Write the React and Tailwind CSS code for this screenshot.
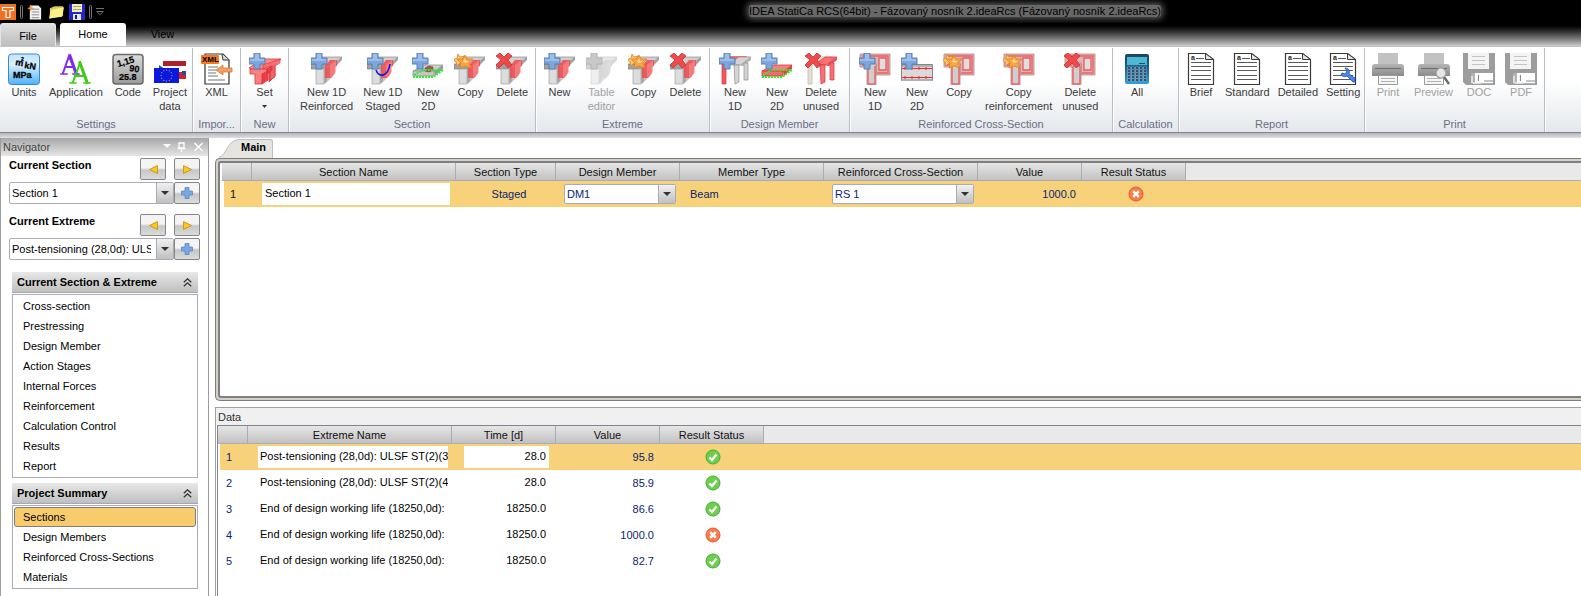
import React from "react";

/* ---------- ribbon icons ---------- */

function Plus() {
  return (
    <g>
      <path d="M5 0h6v5h5v6h-5v5H5v-5H0V5h5z" fill="#7da7dc" stroke="#5b7fb4" strokeWidth="1" />
      <path d="M6 1h4v5h5v2H1V6h5z" fill="#a9c9ee" opacity=".7" />
    </g>
  );
}

function Star() {
  return (
    <g stroke="#d9822b" strokeWidth=".8" fill="#fba63c">
      <path d="M4 1l2 3 4-1-2 4 2 3-4 0-3 3-1-4-3-2 4-2z" fill="#ffc36e" />
      <path d="M11 2l2 4 6 0-4 4 2 5-6-2-5 2 1-5-4-4 6 0z" />
      <path d="M11 5l1 3h3l-3 2-3-1z" fill="#ffd79a" stroke="none" />
    </g>
  );
}

function Cross() {
  return (
    <path
      d="M4 0l4 4 4-4 4 3-4 4 4 5-4 3-4-5-5 5-3-3 5-5-5-4z"
      fill="#ee4a4a"
      stroke="#c92f35"
      strokeWidth=".8"
      strokeLinejoin="round"
    />
  );
}

function Badge({ kind }) {
  if (kind === "plus") return <Plus />;
  if (kind === "star") return <Star />;
  if (kind === "cross") return <Cross />;
  if (kind === "gray") return <path d="M5 0h6v5h5v6h-5v5H5v-5H0V5h5z" fill="#c9c9c9" stroke="#b4b4b4" />;
  return null;
}

function Svg({ children }) {
  return (
    <svg width="32" height="32" viewBox="0 0 32 32" className="block shrink-0" aria-hidden="true">
      {children}
    </svg>
  );
}

function BeamIcon({ badge, curve, disabled }) {
  return (
    <Svg>
      <g opacity={disabled ? 0.45 : 1}>
        <path d="M1 12L9 4h22l-7 6-4 2z" fill="#cfcfcf" stroke="#8e8e8e" strokeWidth=".7" />
        <path d="M25 9l6-5v3l-6 6z" fill="#a4a4a4" />
        <path d="M13 15l10-3v10l-9 9z" fill="#c4c4c4" />
        <path d="M0 11h15v5H0z" fill="#a2a2a2" stroke="#7e7e7e" strokeWidth=".7" />
        <path d="M5 16h8v15H5z" fill="#dcdcdc" stroke="#a4a4a4" strokeWidth=".7" />
        <path d="M13 16l3-2v14l-3 3z" fill="#a8a8a8" />
        <path
          d="M14 13l5-6h7v6l-2 1v6l-4 5h-6z"
          fill={disabled ? "#a4a4a4" : "#ee4a4e"}
          opacity=".85"
        />
        <path d="M19 12l6-5v12l-6 6z" fill={disabled ? "#b8b8b8" : "#fa9090"} opacity=".6" />
      </g>
      {curve && <path d="M9 17c3 8 12 7 14-6" fill="none" stroke="#1414e6" strokeWidth="1.6" />}
      <Badge kind={badge} />
    </Svg>
  );
}

function SetIcon() {
  return (
    <Svg>
      <g stroke="#d8323a" strokeWidth=".8">
        <path d="M0 15l13-9h19l-6 6-14 8z" fill="#fb8d8d" />
        <path d="M20 16l6-5v12l-6 6z" fill="#ec4a50" />
        <path d="M14 12l17-6v4l-5 3v11l-5 3V13l-7 3z" fill="#f76a6a" opacity=".8" />
        <path d="M1 16h17v5h-4l-1 10H6V21H1z" fill="#fb8080" />
        <path d="M18 16l5-3v4l-5 4zM13 21l6-3v9l-6 4z" fill="#e8404a" />
      </g>
      <Badge kind="plus" />
    </Svg>
  );
}

function SlabIcon({ red }) {
  return (
    <Svg>
      <path d="M1 18L13 12h18l-7 6z" fill={red ? "#fb7f7f" : "#d2d2d2"} stroke={red ? "#d8323a" : "#909090"} strokeWidth=".8" />
      <path d="M1 18h21v5H1z" fill={red ? "#f56a6e" : "#c6c6c6"} stroke={red ? "#d8323a" : "#909090"} strokeWidth=".8" />
      <path d="M22 18l9-6v4l-8 7z" fill={red ? "#e2444a" : "#9a9a9a"} />
      {!red && <path d="M13 15l4-2 4 1v3l-4 2-4-1z" fill="#a65a4c" stroke="#7c4036" strokeWidth=".6" />}
      <path
        d="M2 22l9-5h19M1 24h20l10-7"
        fill="none"
        stroke="#2bf02b"
        strokeWidth="2"
        strokeDasharray="2 1"
      />
      <Badge kind="plus" />
    </Svg>
  );
}

function FrameIcon({ badge, allRed }) {
  const a = allRed ? "#e6e0d2" : "#f4565a";
  const b = allRed ? "#f87074" : "#d4d4d4";
  const s = allRed ? "#d8323a" : "#8e8e8e";
  return (
    <Svg>
      <path d="M1 10l10-7h18l-9 4-9 3z" fill={allRed ? "#e6e0d2" : "#f66e6e"} />
      <path d="M3 10h4v21H3z" fill={a} stroke={allRed ? "#b9b3a3" : "#d8323a"} strokeWidth=".7" />
      <path d="M12 10l8-6h12l-6 5-3 3H12z" fill={b} stroke={s} strokeWidth=".7" />
      <path d="M15 12h5v17l-4 2z" fill={b} stroke={s} strokeWidth=".7" />
      <path d="M22 11l5-4 5-3v3l-8 6h-2z" fill={allRed ? "#e8545a" : "#b4b4b4"} />
      <path d="M25 10h4v17h-4z" fill={b} stroke={s} strokeWidth=".7" />
      <Badge kind={badge} />
    </Svg>
  );
}

function RebarIcon({ badge }) {
  return (
    <Svg>
      <path d="M1 1h30v21H17v-8H1z" fill="#dcb4b4" stroke="#b08c8c" strokeWidth=".8" />
      <path d="M3 3h26v17H18M3 12h15" fill="none" stroke="#ee6064" strokeWidth="1.3" />
      <path d="M20 5h7v12h-7z" fill="#dedede" stroke="#ee5a5e" strokeWidth="1.3" />
      <path d="M8 10h9v22H8z" fill="#cfcfcf" stroke="#b08c8c" strokeWidth=".8" />
      <path d="M9 13v18M16 13v18M9 31h7" fill="none" stroke="#ee6468" strokeWidth="1.5" />
      <Badge kind={badge} />
    </Svg>
  );
}

function Rebar2DIcon() {
  return (
    <Svg>
      <path d="M.5 11.5h31v16H.5z" fill="#dadada" stroke="#858585" />
      <path d="M1 12h30v2H1zM1 26h30v2H1z" fill="#b2b2b2" />
      <path d="M1 15.500h30M1 24.500h30" stroke="#ee2a2a" strokeWidth="1" />
      <path d="M3 15.500h28M3 24.500h28" stroke="#ee2a2a" strokeWidth="2" strokeDasharray="2 5" />
      <Badge kind="plus" />
    </Svg>
  );
}

function UnitsIcon() {
  return (
    <Svg>
      <defs>
        <linearGradient id="units" x1="0" y1="0" x2="0" y2="1">
          <stop offset="0" stopColor="#c4e4ff" />
          <stop offset=".35" stopColor="#d8f0ff" />
          <stop offset="1" stopColor="#4db2f8" />
        </linearGradient>
      </defs>
      <rect x=".5" y="1" width="31" height="30.500" rx="3" fill="url(#units)" stroke="#3a86d4" />
      <g fontFamily="Liberation Sans, sans-serif" fontWeight="bold" fill="#000" stroke="#000" strokeWidth=".3">
        <text x="7" y="12" fontSize="9" transform="rotate(10 7 12)">m</text>
        <text x="13" y="8" fontSize="5">2</text>
        <text x="16" y="15" fontSize="9" transform="rotate(10 16 15)">kN</text>
        <text x="5" y="25" fontSize="9">MPa</text>
      </g>
    </Svg>
  );
}

function AppIcon() {
  return (
    <Svg>
      <g fill="none" strokeLinecap="square">
        <path d="M3 20L9 3l7 17M6 14h8" stroke="#7a2cf0" strokeWidth="2" />
        <path d="M10 3l6 17" stroke="#7a2cf0" strokeWidth="3" />
        <path d="M1 21h6M13 21h6" stroke="#7a2cf0" strokeWidth="1.500" />
        <path d="M13 29l7-19 7 19M15 23h9" stroke="#3ecb12" strokeWidth="2" />
        <path d="M20 10l7 19" stroke="#3ecb12" strokeWidth="3" />
        <path d="M10 30h6M24 30h6" stroke="#3ecb12" strokeWidth="1.500" />
      </g>
    </Svg>
  );
}

function CodeIcon() {
  return (
    <Svg>
      <defs>
        <linearGradient id="code" x1="0" y1="0" x2="0" y2="1">
          <stop offset="0" stopColor="#dcdcdc" />
          <stop offset="1" stopColor="#9a9a9a" />
        </linearGradient>
      </defs>
      <rect x="1" y="1.500" width="30" height="29.500" rx="3" fill="url(#code)" stroke="#6a6a6a" strokeWidth="1.500" />
      <g fontFamily="Liberation Sans, sans-serif" fontWeight="bold" fill="#000" stroke="#000" strokeWidth=".2" fontSize="9">
        <text x="6" y="14" transform="rotate(-16 6 14)">1,15</text>
        <text x="17" y="18" transform="rotate(8 17 18)">90</text>
        <text x="7" y="27">25.8</text>
      </g>
    </Svg>
  );
}

function FlagIcon() {
  const dots = [0, 1, 2, 3, 4, 5, 6, 7, 8, 9, 10, 11];
  return (
    <Svg>
      <path d="M9 8h23v5H9z" fill="#b0202c" />
      <path d="M5 12l6 4H5zM27 20l5-2v4h-5z" fill="#2a4f8e" />
      <path d="M24 19h8v7h-8z" fill="#d8202c" />
      <path d="M28 18h4v4h-4z" fill="#25508f" />
      <path d="M9 13h20v2H9z" fill="#fff" />
      <path d="M0 15h25v15H0z" fill="#0a18e0" />
      {dots.map((d) => (
        <circle
          key={d}
          cx={12.5 + 5.5 * Math.cos((d * Math.PI) / 6)}
          cy={22.5 + 5.5 * Math.sin((d * Math.PI) / 6)}
          r=".6"
          fill="#d8d060"
        />
      ))}
    </Svg>
  );
}

function XmlIcon() {
  return (
    <Svg>
      <path d="M4 1h18l6 6v24H4z" fill="#fff" stroke="#333" strokeWidth="1.200" />
      <path d="M21 1l1 6h6" fill="#ddd" stroke="#333" strokeWidth="1" />
      <path d="M7 14h10M7 17h8M7 20h8M7 23h10M7 27h17" stroke="#777" strokeWidth="1.200" />
      <rect x="0" y="2" width="18" height="9" rx="1" fill="#f57a1c" />
      <text x="1" y="9" fontSize="8" fontWeight="bold" fontFamily="Liberation Sans, sans-serif" fill="#000">XML</text>
      <path d="M15 17l7-5v3h9v4h-9v3z" fill="#f2a062" stroke="#d8783a" strokeWidth=".8" />
    </Svg>
  );
}

function CalcIcon() {
  const cells = [0, 1, 2, 3, 4];
  return (
    <Svg>
      <defs>
        <linearGradient id="calc" x1="0" y1="0" x2="0" y2="1">
          <stop offset="0" stopColor="#1c4560" />
          <stop offset=".5" stopColor="#17669c" />
          <stop offset="1" stopColor="#2f9fe0" />
        </linearGradient>
      </defs>
      <rect x="4" y="1" width="24" height="30" rx="2" fill="url(#calc)" />
      <rect x="6" y="4" width="20" height="8" fill="#4cb8d2" />
      <path d="M18 10.500h6" stroke="#14506a" strokeWidth="1" />
      {cells.map((r) =>
        cells.map((c) => (
          <rect key={r + "-" + c} x={6.5 + c * 4} y={14 + r * 3} width="3" height="2" fill="#10283a" stroke="#a4c4d6" strokeWidth=".5" />
        ))
      )}
    </Svg>
  );
}

function DocIcon({ wrench }) {
  return (
    <Svg>
      <path d="M3.500 .5h17l8 6v25h-25v-30z" fill="#fff" stroke="#3a3a3a" strokeWidth="1.200" />
      <path d="M20.500 .5v6h8z" fill="#e4e4e4" stroke="#3a3a3a" strokeWidth="1" />
      <text x="6" y="7" fontSize="7" fontWeight="bold" fontFamily="Liberation Sans, sans-serif" fill="#222">a</text>
      <path d="M11 5.500h8M6 9.500h20M6 13.500h20M6 17.500h20M6 22.500h20M6 26.500h20" stroke="#5a5a5a" strokeWidth="1" />
      {wrench && (
        <path
          d="M14 22c2 2 5 2 6 1l6 6h2v-4l-6-4c1-3 0-6-4-6l2 3-2 3-3-1z"
          fill="#4a84f0"
          stroke="#2a4fb0"
          strokeWidth=".8"
        />
      )}
    </Svg>
  );
}

function PrinterIcon({ lens }) {
  return (
    <Svg>
      <defs>
        <linearGradient id="printer" x1="0" y1="0" x2="0" y2="1">
          <stop offset="0" stopColor="#b4b4b4" />
          <stop offset="1" stopColor="#8a8a8a" />
        </linearGradient>
      </defs>
      <path d="M6 0h20v12H6z" fill="#c2c2c2" />
      <path d="M3 11h26q3 0 3 3v9H0v-9q0-3 3-3z" fill="url(#printer)" />
      <path d="M3 15.500h26" stroke="#6f6f6f" />
      <path d="M6.500 22.500h19v9h-19z" fill="#f6f6f6" stroke="#9a9a9a" />
      <path d="M9 25.500h14M9 28.500h14" stroke="#b0b0b0" />
      {lens && (
        <g>
          <path d="M26 24l5 7" stroke="#6c6c6c" strokeWidth="2.500" />
          <circle cx="23" cy="20" r="5" fill="#e6e6e6" stroke="#9a9a9a" strokeWidth="1.200" />
        </g>
      )}
    </Svg>
  );
}

function DiskIcon() {
  return (
    <Svg>
      <path d="M0 0h32v32H3l-3-3z" fill="#9d9d9d" />
      <path d="M5 0h21v16H5z" fill="#f4f4f4" />
      <path d="M9 3.500h13M9 7.500h13M9 11.500h13" stroke="#c4c4c4" />
      <path d="M8 20h22v11H8z" fill="#b2b2b2" />
      <path d="M12 20h18v10H12z" fill="#fff" />
      <path d="M9 23v7M10 30h8M15 22v6" fill="none" stroke="#eee" strokeWidth="1.500" />
      <path d="M15.500 22v6M21 28h9" stroke="#8a8a8a" strokeWidth="1" />
    </Svg>
  );
}

/* ---------- ribbon ---------- */

const GROUPS = [
  {
    name: "Settings",
    width: "w-[193px]",
    row: "gap-px pl-1",
    tight: true,
    items: [
      { icon: <UnitsIcon />, lines: ["Units"] },
      { icon: <AppIcon />, lines: ["Application"] },
      { icon: <CodeIcon />, lines: ["Code"] },
      { icon: <FlagIcon />, lines: ["Project", "data"] },
    ],
  },
  { name: "Impor...", width: "w-[48px]", row: "justify-center", items: [{ icon: <XmlIcon />, lines: ["XML"] }] },
  {
    name: "New",
    width: "w-[48px]",
    row: "justify-center",
    items: [{ icon: <SetIcon />, lines: ["Set"], menu: true }],
  },
  {
    name: "Section",
    width: "w-[247px]",
    row: "pl-[6px]",
    items: [
      { icon: <BeamIcon badge="plus" />, lines: ["New 1D", "Reinforced"] },
      { icon: <BeamIcon badge="plus" curve />, lines: ["New 1D", "Staged"] },
      { icon: <SlabIcon />, lines: ["New", "2D"] },
      { icon: <BeamIcon badge="star" />, lines: ["Copy"] },
      { icon: <BeamIcon badge="cross" />, lines: ["Delete"] },
    ],
  },
  {
    name: "Extreme",
    width: "w-[174px]",
    row: "justify-center",
    items: [
      { icon: <BeamIcon badge="plus" />, lines: ["New"] },
      { icon: <BeamIcon badge="gray" disabled />, lines: ["Table", "editor"], disabled: true },
      { icon: <BeamIcon badge="star" />, lines: ["Copy"] },
      { icon: <BeamIcon badge="cross" />, lines: ["Delete"] },
    ],
  },
  {
    name: "Design Member",
    width: "w-[140px]",
    row: "pl-1",
    items: [
      { icon: <FrameIcon badge="plus" />, lines: ["New", "1D"] },
      { icon: <SlabIcon red />, lines: ["New", "2D"] },
      { icon: <FrameIcon badge="cross" allRed />, lines: ["Delete", "unused"] },
    ],
  },
  {
    name: "Reinforced Cross-Section",
    width: "w-[263px]",
    row: "pl-1",
    items: [
      { icon: <RebarIcon badge="plus" />, lines: ["New", "1D"] },
      { icon: <Rebar2DIcon />, lines: ["New", "2D"] },
      { icon: <RebarIcon badge="star" />, lines: ["Copy"] },
      { icon: <RebarIcon badge="star" />, lines: ["Copy", "reinforcement"] },
      { icon: <RebarIcon badge="cross" />, lines: ["Delete", "unused"] },
    ],
  },
  {
    name: "Calculation",
    width: "w-[66px]",
    row: "pl-1",
    tight: true,
    items: [{ icon: <CalcIcon />, lines: ["All"] }],
  },
  {
    name: "Report",
    width: "w-[186px]",
    row: "pl-[2px]",
    tight: true,
    items: [
      { icon: <DocIcon />, lines: ["Brief"] },
      { icon: <DocIcon />, lines: ["Standard"] },
      { icon: <DocIcon />, lines: ["Detailed"] },
      { icon: <DocIcon wrench />, lines: ["Setting"] },
    ],
  },
  {
    name: "Print",
    width: "w-[180px]",
    row: "justify-center",
    items: [
      { icon: <PrinterIcon />, lines: ["Print"], disabled: true },
      { icon: <PrinterIcon lens />, lines: ["Preview"], disabled: true },
      { icon: <DiskIcon />, lines: ["DOC"], disabled: true },
      { icon: <DiskIcon />, lines: ["PDF"], disabled: true },
    ],
  },
];

function RibbonButton({ item, tight }) {
  return (
    <button
      type="button"
      disabled={item.disabled}
      className={`flex shrink-0 flex-col items-center text-[#3b3b3b] disabled:text-[#a0a0a0] ${tight ? "px-1" : "px-[5px]"}`}
    >
      {item.icon}
      {item.lines.map((line) => (
        <span key={line} className="leading-[14px] whitespace-nowrap">{line}</span>
      ))}
      {item.menu && (
        <svg width="5" height="3" className="mt-[6px]" aria-hidden="true">
          <path d="M0 0h5L2.500 3z" fill="#333" />
        </svg>
      )}
    </button>
  );
}

function Ribbon() {
  return (
    <section className="flex h-[87px] shrink-0 overflow-hidden border-t border-b border-t-[#c2c2c8] border-b-[#7e8286] bg-linear-to-b from-white from-40% to-[#e4e8ec] pt-px">
      {GROUPS.map((g) => (
        <div
          key={g.name}
          className={`${g.width} flex shrink-0 flex-col justify-between border-r border-[#b9bec6] pt-[5px] shadow-[1px_0_0_#fff]`}
        >
          <div className={`flex ${g.row}`}>
            {g.items.map((item) => (
              <RibbonButton key={item.lines.join(" ")} item={item} tight={g.tight} />
            ))}
          </div>
          <div className="pb-px text-center leading-[14px] text-[#6a6f84]">{g.name}</div>
        </div>
      ))}
    </section>
  );
}

/* ---------- title bar and tabs ---------- */

function Grip() {
  return <span className="h-[14px] w-[3px] rounded-sm border border-[#777]" />;
}

function TitleBar() {
  return (
    <header className="flex h-[23px] shrink-0 items-center bg-black">
      <div className="flex flex-1 items-center gap-1">
        <svg width="16" height="16" viewBox="0 0 16 16" aria-hidden="true">
          <path d="M0 0h16v16H0z" fill="#f36f21" />
          <path d="M2.500 3.500h11v3H10v7H6v-7H2.500z" fill="none" stroke="#fff" strokeWidth="1.200" />
        </svg>
        <Grip />
        <div className="flex gap-[5px]">
          <button type="button" aria-label="New">
            <svg width="16" height="16" viewBox="0 0 17 16" className="block">
              <path d="M3 1h9l3 3v12H3z" fill="#f4f4f4" />
              <path d="M5 5h8M5 8h8M5 11h8M5 14h8" stroke="#888" />
              <path d="M4 0l1 3 3 1-3 1-1 3-1-3-3-1 3-1z" fill="#f59a3a" />
            </svg>
          </button>
          <button type="button" aria-label="Open">
            <svg width="16" height="16" viewBox="0 0 17 16" className="block">
              <path d="M2 4l5-2h9v10l-14 3z" fill="#d9c95a" />
              <path d="M3 6l14-3-2 10-14 2z" fill="#fbf08a" />
            </svg>
          </button>
          <button type="button" aria-label="Save">
            <svg width="16" height="16" viewBox="0 0 16 16" className="block">
              <path d="M0 0h16v16H0z" fill="#2226cc" />
              <path d="M3 0h10v8H3z" fill="#f2eebc" />
              <path d="M4 2.500h8M4 5.500h8" stroke="#a8a468" />
              <path d="M4 10h8v6H4z" fill="#e8e8f4" />
              <path d="M6 11h2v4H6z" fill="#15188c" />
            </svg>
          </button>
        </div>
        <Grip />
        <svg width="8" height="8" viewBox="0 0 8 8" aria-hidden="true">
          <path d="M0 .5h8M.8 3.500h6.400L4 6.800z" fill="none" stroke="#808080" strokeWidth=".9" />
        </svg>
      </div>
      <h1 className="mb-px h-[12px] rounded-[3px] bg-[#686868] leading-[12px] text-black shadow-[0_0_6px_2px_#5c5c5c]">
        IDEA StatiCa RCS(64bit) - Fázovaný nosník 2.ideaRcs (Fázovaný nosník 2.ideaRcs)
      </h1>
      <div className="w-[420px]" />
    </header>
  );
}

function TabBar() {
  return (
    <nav className="flex h-[23px] shrink-0 bg-linear-to-b from-black to-[#cccccc]">
      <button type="button" className="w-[56px] rounded-t-[3px] border border-b-0 border-[#e4e4e4] bg-linear-to-b from-[#e0e0e0] to-[#bdbdbd] pt-[2px]">
        File
      </button>
      <button type="button" className="ml-1 w-[66px] rounded-t-[3px] bg-white pb-[2px] text-black">Home</button>
      <button type="button" className="w-[73px] pb-[2px] text-black">View</button>
    </nav>
  );
}

/* ---------- shared controls ---------- */

function Combo({ label, options, className }) {
  return (
    <div className={`relative rounded-[2px] border border-[#a8acb8] bg-white ${className}`}>
      <select aria-label={label} className="block h-full w-full appearance-none overflow-hidden bg-transparent pr-[22px] pl-[2px] outline-none">
        {options.map((o) => (
          <option key={o}>{o}</option>
        ))}
      </select>
      <span className="pointer-events-none absolute inset-y-0 right-0 flex w-[17px] items-center justify-center border-l border-[#a8acb8] bg-linear-to-b from-[#f0f0f0] to-[#c0c0c0]">
        <svg width="8" height="4" aria-hidden="true">
          <path d="M0 0h8L4 4z" fill="#333" />
        </svg>
      </span>
    </div>
  );
}

function SmallButton({ label, children }) {
  return (
    <button
      type="button"
      aria-label={label}
      className="flex h-[22px] w-[26px] shrink-0 items-center justify-center rounded-[2px] border border-[#868686] bg-linear-to-b from-[#f4f4f4] from-45% via-[#c6c6c6] via-55% to-[#dcdcdc]"
    >
      {children}
    </button>
  );
}

function StatusIcon({ ok }) {
  return (
    <svg width="16" height="16" viewBox="0 0 16 16" className="mx-auto block" role="img" aria-label={ok ? "Passed" : "Failed"}>
      <circle cx="8" cy="8" r="7" fill={ok ? "#6cd04e" : "#fb7b4c"} stroke={ok ? "#41ad35" : "#e85a2c"} />
      {ok ? (
        <path d="M4.500 8.500L7 11l4.500-5.500" fill="none" stroke="#fff" strokeWidth="2.200" />
      ) : (
        <path d="M5.200 5.200l5.600 5.600M10.800 5.200l-5.600 5.600" stroke="#fff" strokeWidth="2.600" />
      )}
    </svg>
  );
}

/* ---------- navigator ---------- */

const SECTION_LINKS = [
  "Cross-section",
  "Prestressing",
  "Design Member",
  "Action Stages",
  "Internal Forces",
  "Reinforcement",
  "Calculation Control",
  "Results",
  "Report",
];
const SUMMARY_LINKS = ["Sections", "Design Members", "Reinforced Cross-Sections", "Materials"];

function Picker({ title, options }) {
  return (
    <div>
      <div className="flex h-[24px] items-start justify-between">
        <h2 className="leading-[14px] font-bold">{title}</h2>
        <div className="flex gap-2">
          <SmallButton label={`Previous, ${title}`}>
            <svg width="9" height="9" viewBox="0 0 8 8" aria-hidden="true">
              <path d="M7.500 .5v7L.5 4z" fill="#ffcc10" stroke="#c09020" strokeWidth=".8" />
            </svg>
          </SmallButton>
          <SmallButton label={`Next, ${title}`}>
            <svg width="9" height="9" viewBox="0 0 8 8" aria-hidden="true">
              <path d="M.5 .5v7L7.500 4z" fill="#ffcc10" stroke="#c09020" strokeWidth=".8" />
            </svg>
          </SmallButton>
        </div>
      </div>
      <div className="flex">
        <Combo label={title} options={options} className="h-[22px] min-w-0 flex-1" />
        <SmallButton label={`Add, ${title}`}>
          <svg width="12" height="12" viewBox="0 0 12 12" aria-hidden="true">
            <path d="M4 .5h4V4h3.500v4H8v3.500H4V8H.5V4H4z" fill="#78a6de" stroke="#5f8ac4" strokeWidth=".8" />
          </svg>
        </SmallButton>
      </div>
    </div>
  );
}

function LinkPanel({ title, links, active }) {
  return (
    <section>
      <div className="flex h-[21px] items-center justify-between border-b border-[#a4a8b4] bg-linear-to-b from-[#e8e8e8] to-[#bfbfbf] px-[5px]">
        <h2 className="font-bold">{title}</h2>
        <svg width="9" height="9" viewBox="0 0 9 9" className="mr-px" aria-hidden="true">
          <path d="M.8 4.200L4.500 .8l3.700 3.400M.8 8.200L4.500 4.800l3.700 3.400" fill="none" stroke="#333" strokeWidth="1.300" />
        </svg>
      </div>
      <ul className="mt-px border border-[#a8acb8] p-px">
        {links.map((l) => (
          <li key={l}>
            <a
              href="#"
              className={
                l === active
                  ? "block h-[20px] rounded-[3px] border border-[#7c7c84] bg-[#f8cc6c] px-2 leading-[18px]"
                  : "block h-[20px] px-[9px] leading-[20px]"
              }
            >
              {l}
            </a>
          </li>
        ))}
      </ul>
    </section>
  );
}

function Navigator() {
  return (
    <aside className="w-[209px] shrink-0 border-r border-l border-[#9c9c9c] bg-white">
      <div className="flex h-[18px] items-center justify-between bg-linear-to-b from-[#a8a8a8] to-[#e6e6e6] pr-[5px] pl-[2px] text-[#444]">
        <h2>Navigator</h2>
        <svg width="40" height="10" viewBox="0 0 40 10" aria-hidden="true">
          <path d="M0 2h8L4 6z" fill="#fff" />
          <path d="M16 1h5v5h-5zM14.500 6.500h8M18.500 6.500V10M31.500 1l8 8M39.500 1l-8 8" fill="none" stroke="#fff" strokeWidth="1.300" />
        </svg>
      </div>
      <div className="flex flex-col gap-[10px] pt-[2px] pr-2 pl-2">
        <Picker title="Current Section" options={["Section 1"]} />
        <Picker title="Current Extreme" options={["Post-tensioning (28,0d): ULSF ST(2)(3)"]} />
      </div>
      <div className="flex flex-col gap-[5px] pt-[12px] pr-[10px] pl-[11px]">
        <LinkPanel title="Current Section & Extreme" links={SECTION_LINKS} />
        <LinkPanel title="Project Summary" links={SUMMARY_LINKS} active="Sections" />
      </div>
    </aside>
  );
}

/* ---------- tables ---------- */

function Head({ labels }) {
  return (
    <thead>
      <tr className="h-[18px]">
        {labels.map((l, i) => (
          <th key={i} scope="col" className="border-r border-b border-[#a9adb6] bg-linear-to-b from-[#e6e6e6] to-[#c2c2c2] font-normal text-[#111]">
            {l}
          </th>
        ))}
        <td className="border-b border-[#a9adb6] bg-[#e9e9e9]" />
      </tr>
    </thead>
  );
}

function Cols({ widths }) {
  return (
    <colgroup>
      {widths.map((w, i) => (
        <col key={i} className={w} />
      ))}
      <col />
    </colgroup>
  );
}

const CELL_INPUT = "block h-[22px] bg-white pb-[2px] text-black outline-none";

function MainTable() {
  return (
    <table className="w-full table-fixed border-separate border-spacing-0">
      <Cols widths={["w-[30px]", "w-[204px]", "w-[100px]", "w-[124px]", "w-[144px]", "w-[154px]", "w-[104px]", "w-[104px]"]} />
      <Head
        labels={["", "Section Name", "Section Type", "Design Member", "Member Type", "Reinforced Cross-Section", "Value", "Result Status"]}
      />
      <tbody>
        <tr className="h-[26px] bg-[#f7d27a] text-[#0b2470]">
          <td className="border-l-2 border-white pl-[6px] text-[#111]">1</td>
          <td className="pl-[10px]">
            <input aria-label="Section name" defaultValue="Section 1" className={`${CELL_INPUT} w-[188px] pl-[3px]`} />
          </td>
          <td className="pl-[6px] text-center">Staged</td>
          <td className="pl-2">
            <Combo label="Design member" options={["DM1"]} className="h-[20px] w-[112px]" />
          </td>
          <td className="pl-[10px]">Beam</td>
          <td className="pl-2">
            <Combo label="Reinforced cross-section" options={["RS 1"]} className="h-[20px] w-[142px]" />
          </td>
          <td className="pr-[6px] text-right">1000.0</td>
          <td className="pl-1"><StatusIcon /></td>
          <td />
        </tr>
      </tbody>
    </table>
  );
}

const EXTREMES = [
  ["Post-tensioning (28,0d): ULSF ST(2)(3", "28.0", "95.8", true],
  ["Post-tensioning (28,0d): ULSF ST(2)(4", "28.0", "85.9", true],
  ["End of design working life (18250,0d):", "18250.0", "86.6", true],
  ["End of design working life (18250,0d):", "18250.0", "1000.0", false],
  ["End of design working life (18250,0d):", "18250.0", "82.7", true],
];

function DataTable() {
  return (
    <table className="w-full table-fixed border-separate border-spacing-0">
      <Cols widths={["w-[30px]", "w-[204px]", "w-[104px]", "w-[104px]", "w-[104px]"]} />
      <Head labels={["", "Extreme Name", "Time [d]", "Value", "Result Status"]} />
      <tbody>
        {EXTREMES.map(([name, time, value, ok], i) => (
          <tr key={i} className={i === 0 ? "h-[26px] bg-[#f7d27a] text-[#0b2470]" : "h-[26px] text-[#0b2470]"}>
            <td className="border-l-2 border-white pl-[6px]">{i + 1}</td>
            <td className="pl-[10px]">
              <input aria-label={`Extreme name ${i + 1}`} defaultValue={name} className={`${CELL_INPUT} w-[190px] pl-[2px]`} />
            </td>
            <td className="pl-3">
              <input aria-label={`Time ${i + 1}`} defaultValue={time} className={`${CELL_INPUT} w-[85px] pr-[3px] text-right`} />
            </td>
            <td className="pr-[6px] text-right">{value}</td>
            <td className="pl-[2px]"><StatusIcon ok={ok} /></td>
            <td />
          </tr>
        ))}
      </tbody>
    </table>
  );
}

function Workspace() {
  return (
    <main className="flex min-w-0 flex-1 flex-col pl-[6px]">
      <div className="flex h-[20px] shrink-0 items-end pt-px pl-1">
        <svg width="22" height="19" viewBox="0 0 22 19" className="block" aria-hidden="true">
          <path d="M0 19C8 16 8 1 20 .5h2V19z" fill="#e6e4e0" />
          <path d="M0 18.500C8 16 8 1 20 .5h2" fill="none" stroke="#c0beb8" />
        </svg>
        <button type="button" className="h-[19px] rounded-tr-[3px] border-t border-r border-[#c0beb8] bg-[#e6e4e0] pr-[6px] pb-1 font-bold">
          Main
        </button>
      </div>
      <div className="flex min-h-[80px] flex-1 flex-col rounded-l-[5px] border border-r-0 border-[#7c7c78] bg-[#d4d0c8] py-[2px] pl-[2px]">
        <div className="flex-1 rounded-l-[3px] border-2 border-r-0 border-[#808084] bg-white pl-[2px]">
          <MainTable />
        </div>
      </div>
      <section className="mt-[6px] flex h-[189px] shrink-0 flex-col overflow-hidden border-t border-l border-[#a0a0a4]">
        <h2 className="h-[17px] shrink-0 bg-[#f0f0f0] pl-[2px] leading-[19px] text-[#333]">Data</h2>
        <div className="ml-px flex-1 border-t border-l border-[#808490]">
          <DataTable />
        </div>
      </section>
    </main>
  );
}

export default function App() {
  return (
    <div className="flex min-h-screen flex-col bg-white font-['Liberation_Sans',Arial,sans-serif] text-[11px] leading-[14px] text-black">
      <TitleBar />
      <TabBar />
      <Ribbon />
      <div className="h-[5px] shrink-0 bg-linear-to-b from-[#b4b8bc] to-[#dde1e6]" />
      <div className="flex flex-1">
        <Navigator />
        <Workspace />
      </div>
    </div>
  );
}
